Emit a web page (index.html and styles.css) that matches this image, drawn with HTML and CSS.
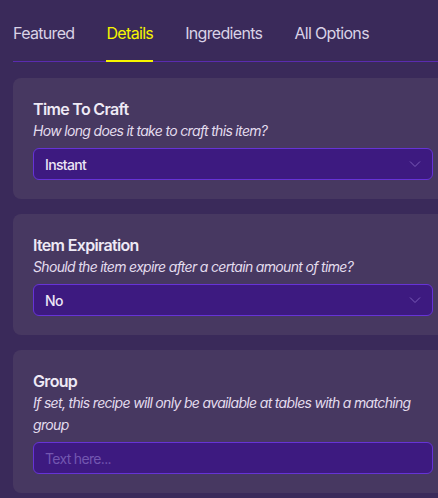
FILE: index.html
```html
<!DOCTYPE html>
<html lang="en">
<head>
<meta charset="utf-8">
<title>Recipe Details</title>
<link rel="stylesheet" href="styles.css">
</head>
<body>
<div class="page">
  <nav class="tabs">
    <div class="tab">Featured</div>
    <div class="tab active">Details</div>
    <div class="tab">Ingredients</div>
    <div class="tab">All Options</div>
  </nav>
  <div class="cards">
    <section class="card">
      <h3 class="title">Time To Craft</h3>
      <p class="desc">How long does it take to craft this item?</p>
      <div class="select"><span>Instant</span><svg class="chev" width="12" height="8" viewBox="0 0 12 8"><path d="M1 1.5 L6 6.5 L11 1.5" fill="none" stroke="currentColor" stroke-width="1"/></svg></div>
    </section>
    <section class="card">
      <h3 class="title">Item Expiration</h3>
      <p class="desc">Should the item expire after a certain amount of time?</p>
      <div class="select"><span>No</span><svg class="chev" width="12" height="8" viewBox="0 0 12 8"><path d="M1 1.5 L6 6.5 L11 1.5" fill="none" stroke="currentColor" stroke-width="1"/></svg></div>
    </section>
    <section class="card">
      <h3 class="title">Group</h3>
      <p class="desc">If set, this recipe will only be available at tables with a matching group</p>
      <div class="input">Text here...</div>
    </section>
  </div>
</div>
</body>
</html>
```
FILE: styles.css
```css
html, body {
  margin: 0;
  padding: 0;
  background: #3a2a5a;
  overflow: hidden;
}
body {
  font-family: Inter, "Noto Sans", sans-serif;
  color: #ece6f4;
  letter-spacing: -0.042em;
}
.page {
  padding-left: 13px;
  width: 440px;
}
.tabs {
  display: flex;
  gap: 32px;
  border-bottom: 1px solid #5a2bb0;
  width: 500px;
}
.tab {
  padding: 21px 0 15px;
  line-height: 24px;
  font-size: 16px;
  color: #d9d2e6;
  border-bottom: 2px solid transparent;
  margin-bottom: -1px;
}
.tab.active {
  color: #f7f500;
  border-bottom-color: #f7f500;
}
.cards {
  margin-top: 16px;
  display: flex;
  flex-direction: column;
  gap: 15px;
}
.card {
  background: #473861;
  border-radius: 8px;
  padding: 20px 20px 19px;
}
.title {
  margin: 0;
  font-size: 16px;
  font-weight: 600;
  line-height: 22px;
  color: #eee9f5;
}
.desc {
  margin: 0 0 6px;
  font-size: 14px;
  font-style: italic;
  line-height: 22px;
  color: #e3dcee;
}
.select, .input {
  box-sizing: border-box;
  height: 32px;
  border: 1px solid #6633d6;
  background: #3d1a80;
  border-radius: 6px;
  display: flex;
  align-items: center;
  padding: 0 11px;
  font-size: 14px;
  font-weight: 500;
}
.select {
  justify-content: space-between;
  color: #ece6f6;
}
.chev {
  color: #7a5cb8;
}
.input {
  color: #7357b0;
  font-weight: 400;
}
```
